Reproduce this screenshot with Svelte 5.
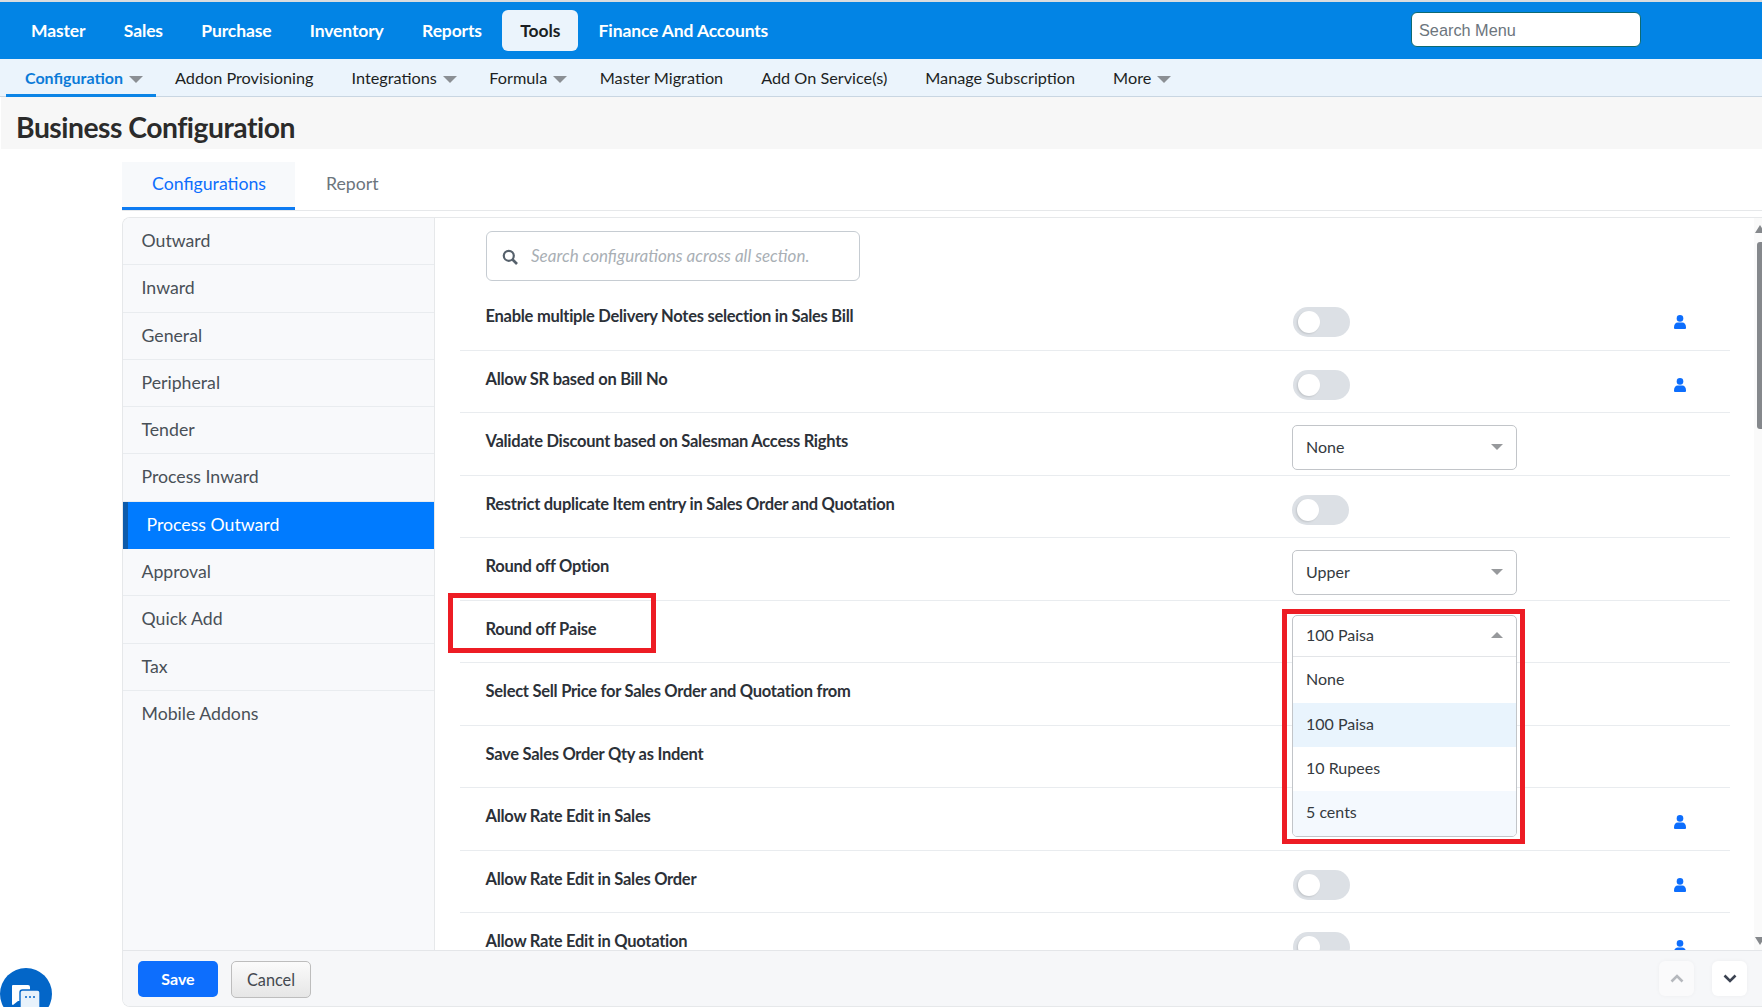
<script>
  const mainNav = ['Master','Sales','Purchase','Inventory','Reports','Tools','Finance And Accounts'];
  const subNav = [
    {t:'Configuration',c:true,a:true},{t:'Addon Provisioning'},{t:'Integrations',c:true},{t:'Formula',c:true},
    {t:'Master Migration'},{t:'Add On Service(s)'},{t:'Manage Subscription'},{t:'More',c:true}
  ];
  const side = ['Outward','Inward','General','Peripheral','Tender','Process Inward','Process Outward','Approval','Quick Add','Tax','Mobile Addons'];
  const rows = [
    {l:'Enable multiple Delivery Notes selection in Sales Bill',k:'t',u:true},
    {l:'Allow SR based on Bill No',k:'t',u:true},
    {l:'Validate Discount based on Salesman Access Rights',k:'s',v:'None'},
    {l:'Restrict duplicate Item entry in Sales Order and Quotation',k:'t',n:true},
    {l:'Round off Option',k:'s',v:'Upper'},
    {l:'Round off Paise',k:'o',v:'100 Paisa'},
    {l:'Select Sell Price for Sales Order and Quotation from',k:'n'},
    {l:'Save Sales Order Qty as Indent',k:'n'},
    {l:'Allow Rate Edit in Sales',k:'t',u:true},
    {l:'Allow Rate Edit in Sales Order',k:'t',u:true},
    {l:'Allow Rate Edit in Quotation',k:'t',u:true}
  ];
  const options = ['None','100 Paisa','10 Rupees','5 cents'];
</script>

<div class="page">
  <header class="top">
    <nav class="main">
      {#each mainNav as n}
        <span class="mi" class:on={n==='Tools'}>{n}</span>
      {/each}
    </nav>
    <input class="menu-search" placeholder="Search Menu" />
  </header>

  <nav class="sub">
    {#each subNav as s}
      <span class="si" class:on={s.a} class:car={s.c}>{s.t}{#if s.c}<i class="caret"></i>{/if}</span>
    {/each}
  </nav>

  <div class="title"><h1>Business Configuration</h1></div>

  <div class="tabs">
    <span class="tab on">Configurations</span>
    <span class="tab">Report</span>
  </div>

  <section class="card">
    <div class="body">
      <aside class="side">
        {#each side as s}
          <div class="sitem" class:on={s==='Process Outward'}>{s}</div>
        {/each}
      </aside>
      <div class="content">
        <div class="search">
          <svg width="16" height="16" viewBox="0 0 16 16"><circle cx="6.8" cy="6.8" r="5" fill="none" stroke="#56616c" stroke-width="2.2"/><path d="M10.5 10.5L15 15" stroke="#56616c" stroke-width="2.6"/></svg>
          <span class="ph">Search configurations across all section.</span>
        </div>
        {#each rows as r}
          <div class="row">
            <div class="lab">{r.l}</div>
            <div class="ctl">
              {#if r.k==='t'}
                <span class="tog" class:nudge={r.n}><span class="knob"></span></span>
              {:else if r.k==='s'}
                <div class="sel"><span>{r.v}</span><i class="tri"></i></div>
              {:else if r.k==='o'}
                <div class="dd">
                  <div class="ddh"><span>{r.v}</span><i class="tri up"></i></div>
                  {#each options as o, i}
                    <div class="opt o{i}">{o}</div>
                  {/each}
                </div>
              {/if}
            </div>
            <div class="usr">
              {#if r.u}
                <svg width="12" height="14" viewBox="0 0 12 14"><circle cx="6" cy="3.4" r="3.3" fill="#0d6efd"/><path d="M0 12.2C0 9 1.8 7.4 3.6 7.4h4.8C10.2 7.4 12 9 12 12.2V13a1 1 0 0 1-1 1H1a1 1 0 0 1-1-1z" fill="#0d6efd"/></svg>
              {/if}
            </div>
          </div>
        {/each}
        <div class="bar"><div class="ar at"></div><div class="thumb"></div><div class="ar ab"></div></div>
      </div>
    </div>
    <footer class="foot">
      <button class="save">Save</button>
      <button class="cancel">Cancel</button>
      <div class="chev">
        <span class="cb dim"><svg width="14" height="9" viewBox="0 0 14 9"><path d="M1.5 7.5L7 2l5.5 5.5" fill="none" stroke="#b5b8bd" stroke-width="2.6"/></svg></span>
        <span class="cb"><svg width="14" height="9" viewBox="0 0 14 9"><path d="M1.5 1.5L7 7l5.5-5.5" fill="none" stroke="#3c4352" stroke-width="2.6"/></svg></span>
      </div>
    </footer>
  </section>

  <div class="mark m1"></div>
  <div class="mark m2"></div>

  <div class="chat">
    <svg width="30" height="26" viewBox="0 0 30 26">
      <path d="M2 0h15a2 2 0 0 1 2 2v12a2 2 0 0 1-2 2H7l-5 4a1 1 0 0 1-1-1V1a1 1 0 0 1 1-1z" fill="#fff" transform="translate(0 1)"/>
      <rect x="9" y="6" width="20" height="20" rx="2.5" fill="#e8f2fb" stroke="#0366c8" stroke-width="1.4"/>
      <circle cx="15" cy="13" r="1" fill="#0366c8"/><circle cx="19" cy="13" r="1" fill="#0366c8"/><circle cx="23" cy="13" r="1" fill="#0366c8"/>
    </svg>
  </div>
</div>

<style>
  :global(body){margin:0;background:#fff;}
  .page{position:relative;height:1007px;width:1762px;overflow:hidden;display:flex;flex-direction:column;font-family:Lato,"Liberation Sans",sans-serif;border-top:2px solid #d9dcdf;box-sizing:border-box;}
  .top{height:57px;flex:none;background:#0284e5;display:flex;align-items:center;justify-content:space-between;padding:0 121px 0 13px;}
  .main{display:flex;align-items:center;gap:2.4px;}
  .mi{height:41px;line-height:41px;padding:0 18px;color:#fff;font-size:17.5px;font-weight:700;border-radius:6px;letter-spacing:-.13px;margin-top:-1px;}
  .mi.on{background:#ebf4fc;color:#1c1f23;padding:0 18px;}
  .menu-search{width:230px;height:35px;box-sizing:border-box;border:1px solid #0e6a72;border-radius:6px;padding:1px 7px 0;font:16.3px "Liberation Sans",sans-serif;background:#fff;margin-top:-2px;}
  .menu-search::placeholder{color:#6c757d;opacity:1;}
  .sub{height:38px;flex:none;box-sizing:border-box;background:#ebf4fc;border-bottom:1px solid #c9d6e2;display:flex;padding-left:6px;}
  .si{position:relative;height:38px;line-height:37px;padding:0 19px;font-size:16.25px;color:#1c1f23;white-space:nowrap;box-sizing:border-box;}
  .si.car{margin-right:-5.5px;}
  .si.on{color:#0b7bd8;font-weight:700;font-size:16px;border-bottom:3px solid #0b84e6;padding-right:13px;margin-right:0;}
  .caret{display:inline-block;border-left:7px solid transparent;border-right:7px solid transparent;border-top:7px solid #8b8f94;margin-left:6px;vertical-align:1px;}
  .title{height:52px;flex:none;background:#f7f7f7;padding-left:15px;margin-left:1px;}
  h1{margin:0;font-size:28.3px;line-height:61px;font-weight:700;color:#2b2b2b;letter-spacing:-.5px;}
  .tabs{margin:13px 0 0 122px;height:49px;flex:none;box-sizing:border-box;border-bottom:1px solid #e6e8ea;display:flex;}
  .tab{height:48px;box-sizing:border-box;line-height:43px;font-size:17.7px;color:#6c757d;padding:0 30px 0 31px;}
  .tab.on{width:173px;padding:0 0 0 30px;background:#f7f9fb;color:#0d6efd;border-bottom:3px solid #0d7bf2;}
  .card{margin:6px 0 0 122px;flex:1;min-height:0;border:1px solid #e6e8ea;border-right:none;border-radius:8px 0 0 8px;display:flex;flex-direction:column;overflow:hidden;}
  .body{flex:1;min-height:0;display:flex;overflow:hidden;}
  .side{width:311px;flex:none;background:#f8f9fb;border-right:1px solid #e6e8ea;}
  .sitem{height:47.3px;line-height:46px;box-sizing:border-box;border-bottom:1px solid #e9ecef;padding-left:18.5px;font-size:17.7px;color:#495057;}
  .sitem:last-child{border-bottom:none;}
  .sitem.on{background:#007bff;color:#fff;border-left:5px solid #0d5bab;padding-left:18.5px;border-bottom:none;}
  .content{flex:1;position:relative;padding:13px 0 0 25px;box-sizing:border-box;min-width:0;}
  .search{width:374px;height:50px;box-sizing:border-box;margin-left:26px;margin-bottom:7px;border:1px solid #c6ccd2;border-radius:6px;display:flex;align-items:center;padding-left:15px;gap:13px;overflow:hidden;}
  .search svg{margin-top:2px;flex:none;}
  .ph{width:279px;overflow:hidden;white-space:nowrap;font-style:italic;font-size:17px;color:#a9afb5;margin-top:-2px;}
  .row{width:1270px;height:62.5px;box-sizing:border-box;border-bottom:1px solid #e9ecef;display:grid;grid-template-columns:832px 376px 24px;}
  .lab{padding:17px 0 0 25.5px;font-size:16.5px;line-height:22px;font-weight:700;color:#2c3138;letter-spacing:-.27px;white-space:nowrap;}
  .ctl{position:relative;}
  .tog{display:block;width:57px;height:30px;margin:19px 0 0 1px;border-radius:15px;background:#dce0e5;position:relative;}
  .tog.nudge{margin-left:0;}
  .knob{position:absolute;left:5px;top:4px;width:22px;height:22px;border-radius:50%;background:#fff;box-shadow:-1px 1px 2px rgba(0,0,0,.12);}
  .sel,.ddh{height:45px;box-sizing:border-box;width:225px;display:flex;align-items:center;justify-content:space-between;padding:0 13px 2px;font-size:16px;color:#343a40;font-family:Lato,sans-serif;}
  .sel{margin-top:12px;border:1px solid #c2c5c9;border-radius:5px;}
  .tri{border-left:6px solid transparent;border-right:6px solid transparent;border-top:6.5px solid #97999c;}
  .tri.up{border-top:none;border-bottom:6.5px solid #97999c;}
  .dd{position:absolute;left:0;top:14px;width:225px;box-sizing:border-box;border:1px solid #c2c5c9;border-radius:5px;background:#fff;z-index:2;overflow:hidden;}
  .ddh{width:auto;height:41px;border-bottom:1px solid #e3e5e8;}
  .opt{height:44px;line-height:41px;padding-left:13px;font-size:16px;color:#343a40;}
  .o0{height:46px;line-height:43px;}
  .o1{background:#e9f4fd;}
  .o3{background:#f4f9fe;height:45px;}
  .usr{display:flex;justify-content:center;padding-top:27px;box-sizing:border-box;align-items:flex-start;}
  .bar{position:absolute;right:0;top:0;bottom:0;width:8px;background:#fafafa;}
  .thumb{position:absolute;right:0;top:24px;width:5px;height:187px;background:#85888c;border-radius:3px 0 0 3px;}
  .ar{position:absolute;right:-3px;border-left:5px solid transparent;border-right:5px solid transparent;}
  .at{top:7px;border-bottom:8px solid #85888c;}
  .ab{bottom:5px;border-top:8px solid #85888c;}
  .foot{height:56px;flex:none;box-sizing:border-box;background:#f6f7f9;border-top:1px solid #e4e6e9;display:flex;align-items:flex-start;padding:10px 15px 0 15px;gap:13px;}
  button{font-family:Lato,sans-serif;font-size:16px;height:36px;width:80px;border-radius:5px;padding:0;}
  .save{background:#0d6efd;color:#fff;border:none;font-weight:700;padding-bottom:2px;}
  .cancel{background:linear-gradient(#fbfbfb,#e6e6e6);border:1px solid #bdbdbd;color:#444950;height:37px;font-size:16.3px;}
  .chev{margin-left:auto;display:flex;gap:18px;}
  .cb{width:35px;height:35px;border-radius:6px;background:#fff;display:flex;align-items:center;justify-content:center;box-shadow:0 0 4px rgba(0,0,0,.04);}
  .cb.dim{background:#fafafb;}
  .mark{position:absolute;border:5px solid #ed1c24;box-sizing:border-box;z-index:3;}
  .m1{left:447.5px;top:591px;width:208px;height:60px;}
  .m2{left:1282px;top:607px;width:243px;height:235px;}
  .chat{position:absolute;left:0;top:966px;width:52px;height:52px;border-radius:50%;background:#0366c8;z-index:3;}
  .chat svg{position:absolute;left:11px;top:16px;}
</style>
